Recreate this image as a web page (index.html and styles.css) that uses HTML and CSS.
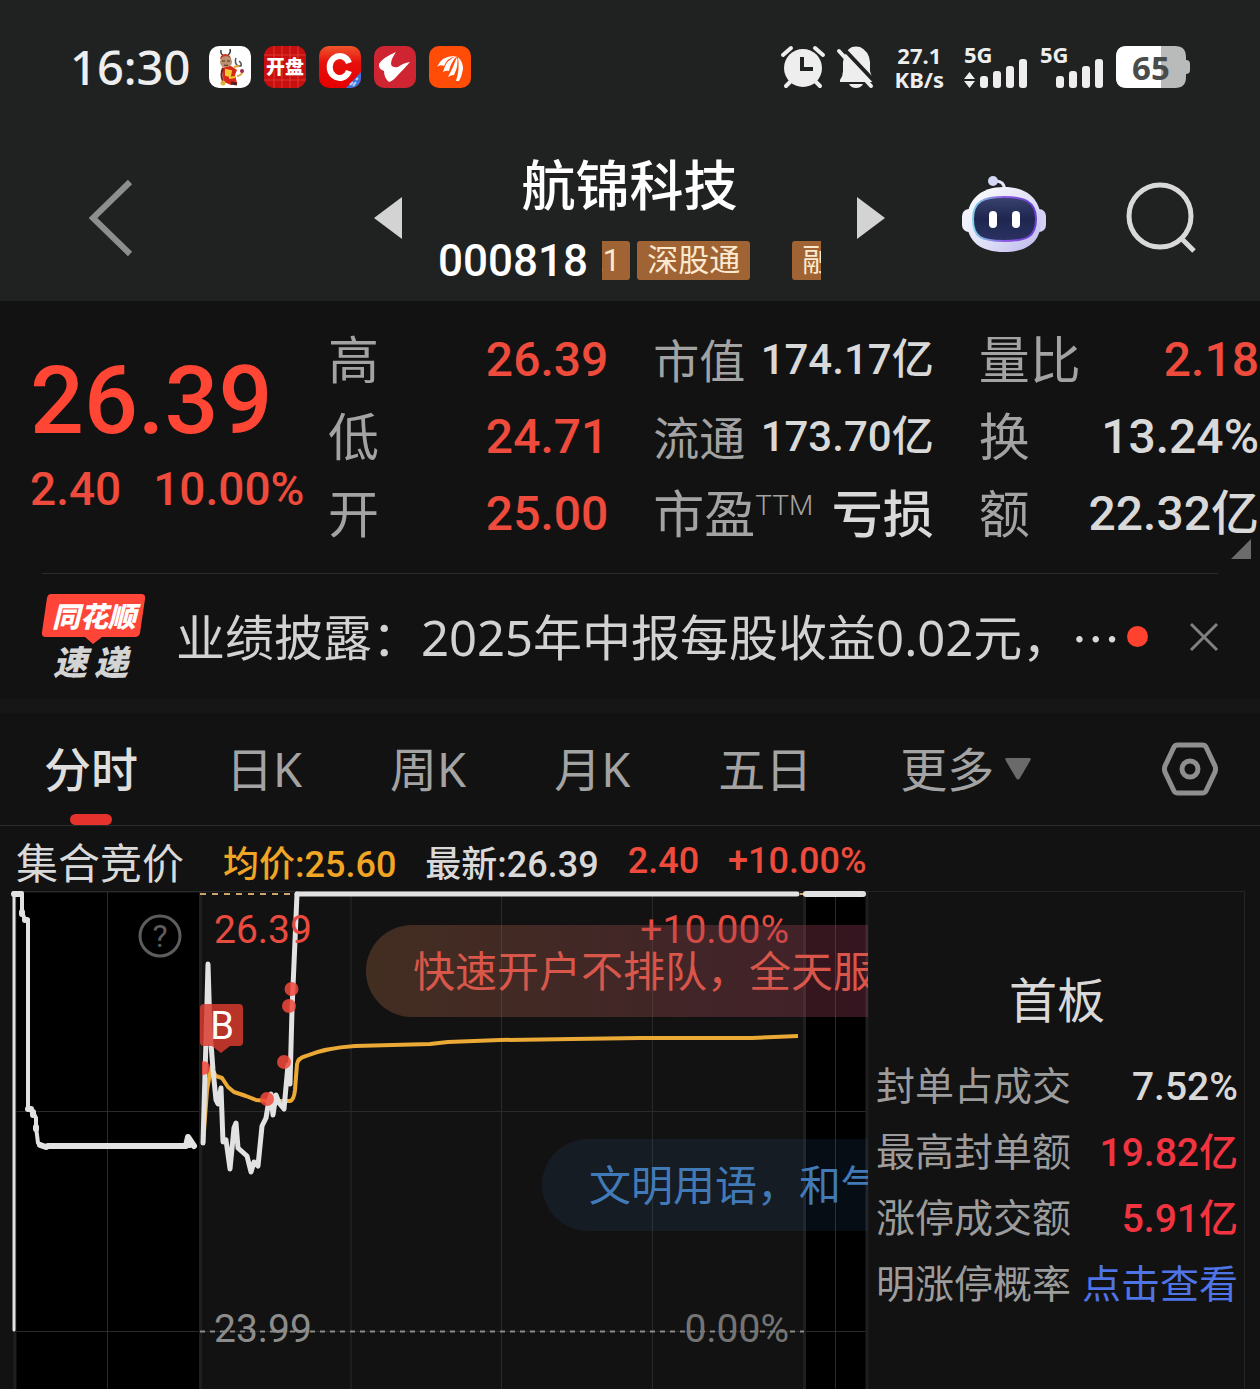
FILE: index.html
```html
<!DOCTYPE html>
<html lang="zh-CN">
<head>
<meta charset="utf-8">
<meta name="viewport" content="width=device-width, initial-scale=1">
<title>航锦科技 000818</title>
<link rel="stylesheet" href="styles.css">
</head>
<body>
<div class="top">
  <div class="status">
    <time class="clock">16:30</time>
    <div class="apps">
      <svg class="app" viewBox="0 0 42 42" role="img" aria-label="财神">
        <rect width="42" height="42" rx="10" fill="#fff"/>
        <path d="M12 4q-1 5 4 6M21 3q1 4-2 6" fill="none" stroke="#333" stroke-width="1.5"/>
        <path d="M12 10q4-4 9 0l1 3H11z" fill="#c8371c"/>
        <ellipse cx="17" cy="16" rx="6" ry="6" fill="#b99272"/>
        <path d="M13 15h3M18 15h3M15 19q2 1 4 0" stroke="#4a2c1e" fill="none"/>
        <path d="M13 22l9-2 6 4-2 5 2 8-6 2-7-3-1-5z" fill="#d8281a"/>
        <path d="M17 24l5 1-1 5-4-1zM20 32l6-1" fill="#f3c832" stroke="#f3c832" stroke-width="2"/>
        <path d="M14 22q-3 7 0 13" stroke="#7a1c14" stroke-width="2" fill="none"/>
        <circle cx="14" cy="37" r="2.5" fill="#e0b23c"/>
        <path d="M27 12q-2 5 2 8h3q1-3-2-5" fill="none" stroke="#555" stroke-width="1.5"/>
        <path d="M25 21l5-1M28 30q4 0 6-5" stroke="#e0a63c" stroke-width="2" fill="none"/>
        <circle cx="33" cy="25" r="2" fill="#a32a4a"/>
        <path d="M22 37l6 1" stroke="#55201c" stroke-width="3"/>
      </svg>
      <svg class="app" viewBox="0 0 42 42" role="img" aria-label="开盘">
        <rect width="42" height="42" rx="10" fill="#c70f10"/>
        <path d="M10 0v42M18 0v42M26 0v42M34 0v42M0 9h42M0 34h42" stroke="#e0392f"/>
        <text class="app-text" x="21" y="28" text-anchor="middle">开盘</text>
      </svg>
      <svg class="app" viewBox="0 0 42 42" role="img" aria-label="C 电股">
        <defs>
          <linearGradient id="cg" x1="0" y1="0" x2="0" y2="1"><stop offset="0" stop-color="#f0562a"/><stop offset=".4" stop-color="#e60f0c"/><stop offset="1" stop-color="#e60000"/></linearGradient>
          <clipPath id="cc"><rect width="42" height="42" rx="10"/></clipPath>
        </defs>
        <g clip-path="url(#cc)">
          <rect width="42" height="42" fill="url(#cg)"/>
          <path d="M42 26v16H27z" fill="#3a73dc"/>
          <path d="M31 39l3-3M34 40l3-4M37 34l2-2" stroke="#b8d0ff" stroke-width="2"/>
        </g>
        <path d="M30 17A10 11 0 1 0 30 25" fill="none" stroke="#fff" stroke-width="6"/>
      </svg>
      <svg class="app" viewBox="0 0 42 42" role="img" aria-label="同花顺">
        <rect width="42" height="42" rx="10" fill="#cf2431"/>
        <path d="M22 6q-14 6-17 12-1 5 5 7 0 7 5 11 4-1 8-6 7-7 13-14-7 1-12 5-6 1-7-3 0-5 5-12z" fill="#fff"/>
      </svg>
      <svg class="app" viewBox="0 0 42 42" role="img" aria-label="东方财富">
        <rect width="42" height="42" rx="10" fill="#ff4d08"/>
        <path d="M8 21Q13 9 27 10q-9 2-12 10-4-2-7 1zM14 26Q17 13 28 10q-6 6-8 15-3-1-6 1zM19 31Q24 22 28 11q2 8-3 18-3 0-6 2zM27 35q4-12 2-24 5 5 5 12-1 7-4 12z" fill="#fff"/>
      </svg>
    </div>
    <div class="indicators">
      <svg class="ic-alarm" viewBox="0 0 44 42" aria-label="闹钟" role="img">
        <path d="M2 9l8-7M42 9l-8-7" stroke="#eee" stroke-width="4" stroke-linecap="round"/>
        <path d="M5 40l6-6M39 40l-6-6" stroke="#eee" stroke-width="4" stroke-linecap="round"/>
        <circle cx="22" cy="22" r="19" fill="#eee"/>
        <path d="M21 11v12h11" fill="none" stroke="#202221" stroke-width="4"/>
      </svg>
      <svg class="ic-bell" viewBox="0 0 38 42" aria-label="静音" role="img">
        <path d="M3 34q3-4 3-9v-9Q8 4 15 1q4-1 8 0 9 4 10 15v9q1 5 4 9v2H3z" fill="#eee"/>
        <path d="M12 38h14q-2 4-7 4t-7-4z" fill="#eee"/>
        <path d="M5 1l34 36" stroke="#202221" stroke-width="4"/>
        <path d="M2 5l32 35" stroke="#eee" stroke-width="4" stroke-linecap="round"/>
      </svg>
      <div class="speed"><span>27.1</span><span>KB/s</span></div>
      <svg class="ic-signal" viewBox="0 0 64 42" role="img" aria-label="5G 信号">
        <text class="sig-text" x="0" y="17">5G</text>
        <path d="M5.5 26l5.5 7H0zM5.500 42L0 35h11z" fill="#eee"/>
        <g fill="#eee"><rect x="16" y="30" width="8" height="12" rx="3"/><rect x="29" y="25" width="8" height="17" rx="3"/><rect x="42" y="20" width="8" height="22" rx="3"/><rect x="55" y="13" width="8" height="29" rx="3"/></g>
      </svg>
      <svg class="ic-signal" viewBox="0 0 64 42" role="img" aria-label="5G 信号">
        <text class="sig-text" x="0" y="17">5G</text>
        <g fill="#eee"><rect x="16" y="30" width="8" height="12" rx="3"/><rect x="29" y="25" width="8" height="17" rx="3"/><rect x="42" y="20" width="8" height="22" rx="3"/><rect x="55" y="13" width="8" height="29" rx="3"/></g>
      </svg>
      <svg class="ic-battery" viewBox="0 0 74 42" role="img" aria-label="电量 65">
        <defs><clipPath id="bat"><path d="M11 0h48q11 0 11 11v3q4 0 4 4v6q0 4-4 4v3q0 11-11 11H11Q0 42 0 31V11Q0 0 11 0z"/></clipPath></defs>
        <g clip-path="url(#bat)"><rect width="74" height="42" fill="#b9bbba"/><rect width="45" height="42" fill="#fff"/></g>
        <text class="bat-text" x="35" y="34" text-anchor="middle">65</text>
      </svg>
    </div>
  </div>

  <header class="header">
    <button class="icon-btn back" aria-label="返回">
      <svg width="42" height="76" viewBox="0 0 42 76"><path d="M40 2L3 38l37 36" fill="none" stroke="#8d8f8e" stroke-width="6"/></svg>
    </button>
    <div class="stock">
      <button class="icon-btn" aria-label="上一只"><svg width="28" height="42" viewBox="0 0 28 42"><path d="M28 0v42L0 21z" fill="#d3d3d3"/></svg></button>
      <div class="stock-title">
        <h1>航锦科技</h1>
        <div class="code-row">
          <span class="code">000818</span>
          <div class="ticker"><span class="tag tag-first">L1</span><span class="tag">深股通</span><span class="tag tag-next">融</span></div>
        </div>
      </div>
      <button class="icon-btn" aria-label="下一只"><svg width="28" height="42" viewBox="0 0 28 42"><path d="M0 0v42l28-21z" fill="#d3d3d3"/></svg></button>
    </div>
    <div class="actions">
      <button class="icon-btn robot" aria-label="智能助手">
        <svg width="84" height="78" viewBox="0 0 84 78">
          <defs>
            <linearGradient id="rb" x1="0" y1="0" x2="1" y2="1"><stop offset="0" stop-color="#fff"/><stop offset=".6" stop-color="#dcdcf6"/><stop offset="1" stop-color="#b9b4ea"/></linearGradient>
            <linearGradient id="rs" x1="0" y1="0" x2="1" y2="0"><stop offset="0" stop-color="#7fd0e8"/><stop offset=".5" stop-color="#8a5ae0"/><stop offset="1" stop-color="#6a3fd6"/></linearGradient>
            <linearGradient id="rf" x1="0" y1="0" x2="0" y2="1"><stop offset="0" stop-color="#39436e"/><stop offset=".5" stop-color="#1e2650"/><stop offset="1" stop-color="#2b3262"/></linearGradient>
          </defs>
          <path d="M32 6q10-1 11 9" fill="none" stroke="#e4e4fa" stroke-width="3"/>
          <circle cx="31" cy="6" r="5" fill="#d5d8f4"/>
          <rect x="0" y="34" width="16" height="23" rx="7" fill="#f1f1fd"/><rect x="68" y="34" width="16" height="23" rx="7" fill="#d4d0f6"/>
          <path d="M42 12c24 0 37 13 37 34S65 77 42 77 5 67 5 46s13-34 37-34z" fill="url(#rb)"/>
          <path d="M42 22c20 0 32 4 32 22S65 66 42 66 11 62 11 44s11-22 31-22z" fill="url(#rf)" stroke="url(#rs)" stroke-width="2"/>
          <rect x="27" y="36" width="8" height="17" rx="4" fill="#fff"/><rect x="50" y="36" width="8" height="17" rx="4" fill="#fff"/>
        </svg>
      </button>
      <button class="icon-btn" aria-label="搜索">
        <svg width="70" height="70" viewBox="0 0 70 70"><circle cx="34" cy="33" r="31" fill="none" stroke="#d9d9d9" stroke-width="5"/><path d="M56 56l12 12" stroke="#d9d9d9" stroke-width="5"/></svg>
      </button>
    </div>
  </header>
</div>

<main>
  <section class="quote">
    <div class="price">
      <strong>26.39</strong>
      <div class="change"><span>2.40</span><span>10.00%</span></div>
    </div>
    <dl class="stats">
      <div><dt>高</dt><dd class="up">26.39</dd></div>
      <div class="compact"><dt>市值</dt><dd>174.17亿</dd></div>
      <div><dt>量比</dt><dd class="up">2.18</dd></div>
      <div><dt>低</dt><dd class="up">24.71</dd></div>
      <div class="compact"><dt>流通</dt><dd>173.70亿</dd></div>
      <div><dt>换</dt><dd>13.24%</dd></div>
      <div><dt>开</dt><dd class="up">25.00</dd></div>
      <div class="wordy"><dt>市盈<sup>TTM</sup></dt><dd>亏损</dd></div>
      <div><dt>额</dt><dd>22.32亿</dd></div>
    </dl>
    <svg class="corner" viewBox="0 0 20 20" aria-hidden="true"><path d="M20 0v20H0z" fill="#6b6b6b"/></svg>
  </section>

  <section class="news">
    <svg class="news-logo" viewBox="0 0 104 86" role="img" aria-label="同花顺速递">
      <path d="M9 0h90q5 0 4 5l-5 34q-1 4-5 4H60l-9 7-8-7H4q-5 0-4-5L5 4q1-4 4-4z" fill="#ff4538"/>
      <text class="logo-a" x="10" y="33">同花顺</text>
      <text class="logo-b" x="11" y="81">速</text><text class="logo-b" x="52" y="81">递</text>
    </svg>
    <a class="headline" href="#">业绩披露：2025年中报每股收益0.02元，</a>
    <span class="more-dots">⋯</span>
    <span class="dot"></span>
    <button class="icon-btn close" aria-label="关闭"><svg width="28" height="28" viewBox="0 0 28 28"><path d="M1 1l26 26M27 1L1 27" stroke="#808080" stroke-width="3"/></svg></button>
  </section>

  <nav class="tabs">
    <button class="tab active">分时</button>
    <button class="tab">日K</button>
    <button class="tab">周K</button>
    <button class="tab">月K</button>
    <button class="tab">五日</button>
    <button class="tab more">更多<svg width="26" height="22" viewBox="0 0 26 22"><path d="M2 0h22q3 0 1 3L15 20q-2 3-4 0L1 3Q-1 0 2 0z" fill="#6a6a6a"/></svg></button>
    <button class="icon-btn settings" aria-label="设置"><svg width="56" height="54" viewBox="0 0 56 54"><path d="M16 3h24q3 0 4 2l9 19q1 3 0 6l-9 19q-1 2-4 2H16q-3 0-4-2L3 30q-1-3 0-6l9-19q1-2 4-2z" fill="none" stroke="#8f8f8f" stroke-width="5"/><circle cx="28" cy="27" r="8" fill="none" stroke="#8f8f8f" stroke-width="5"/></svg></button>
  </nav>

  <div class="legend">
    <span class="auction">集合竞价</span>
    <span class="avg">均价:25.60</span>
    <span>最新:26.39</span>
    <span class="up">2.40</span>
    <span class="up">+10.00%</span>
  </div>

  <div class="board">
    <div class="chart">
      <svg class="plot" viewBox="0 891 868 498" role="img" aria-label="分时走势">
        <rect x="16" y="893" width="183" height="496" fill="#000"/>
        <rect x="806" y="893" width="60" height="496" fill="#000"/>
        <g stroke="#2a2a2a" stroke-width="1">
          <path d="M14 891.500H868M14 1111.500H868M14 1331.500H868"/>
          <path d="M107.500 892V1389M351 892V1389M501.500 892V1389M652.500 892V1389M835.500 892V1389"/>
        </g>
        <path d="M15 892V1389M200.500 892V1389M804.500 892V1389M867 892V1389" stroke="#1f1f1f" stroke-width="3"/>
        <path d="M200 894H296M800 894H804" stroke="#cda46a" stroke-width="2" stroke-dasharray="6 6"/>
        <path d="M200 1331.500H804" stroke="#8a8a8a" stroke-width="2" stroke-dasharray="5 5"/>

        <path d="M203 1145L207 1090 211 1068 216 1076 222 1078 228 1087 234 1092 246 1096 256 1100 268 1101 280 1101H290Q294 1100 295 1090L297 1064Q298 1058 306 1056 325 1048 355 1046L430 1044 448 1042 500 1040 572 1039 640 1038 752 1038 798 1036" fill="none" stroke="#eba935" stroke-width="4" stroke-linejoin="round"/>
        <g fill="none" stroke="#e2e2e2" stroke-linejoin="round" stroke-linecap="round">
          <path d="M14 1330V893" stroke-width="3"/>
          <path d="M14 893H22V912L25 920H28V1109L33 1112 36 1118 36 1127 38 1143 44 1146H190" stroke-width="4"/>
          <path d="M14 894H20M22 912V914M25 920H27M28 1109H31M33 1112V1115M36 1127V1129M40 1145L46 1147 48 1146H186L188 1137 194 1146" stroke-width="6"/>
          <path d="M203 1143L206 1040 208 964 210 1030 213 1070 216 1100 218 1104 221 1088 223 1142 226 1140 230 1169 234 1128 236 1123 238 1148 247 1156 251 1172 254 1162 258 1166 262 1126 266 1118 269 1100 271 1094 273 1115 276 1095 279 1103 284 1109 288 1065 290 1084 292 1010 297 894" stroke-width="5"/>
          <path d="M297 894H797" stroke-width="5"/>
          <path d="M806 894H863" stroke-width="6"/>
        </g>
        <g fill="#f0483a" fill-opacity=".86">
          <path d="M202 1061q8 0 8 7t-8 7z"/>
          <circle cx="291.500" cy="989" r="7"/><circle cx="289" cy="1006" r="7"/><circle cx="284" cy="1062" r="7"/><circle cx="267" cy="1099" r="7"/>
          <path d="M204 1004h35q4 0 4 4v34q0 4-4 4h-9l-9 7-9-7h-8q-4 0-4-4v-34q0-4 4-4z" fill="#d93a2d" fill-opacity=".84"/>
        </g>
        <text class="buy" x="222" y="1039" text-anchor="middle">B</text>
        <circle cx="160" cy="936" r="20" fill="none" stroke="#5d5d5d" stroke-width="3"/>
        <text class="help" x="160" y="947" text-anchor="middle">?</text>
        <text class="axis axis-up" x="214" y="943">26.39</text>
        <text class="axis axis-up" x="789" y="943" text-anchor="end">+10.00%</text>
        <text class="axis axis-base" x="214" y="1342">23.99</text>
        <text class="axis axis-base dim" x="789" y="1342" text-anchor="end">0.00%</text>
      </svg>
      <div class="bubble bubble-red">快速开户不排队，全天服务</div>
      <div class="bubble bubble-blue">文明用语，和气生财</div>
    </div>

    <aside class="panel">
      <h2>首板</h2>
      <dl>
        <div><dt>封单占成交</dt><dd>7.52%</dd></div>
        <div><dt>最高封单额</dt><dd class="red">19.82亿</dd></div>
        <div><dt>涨停成交额</dt><dd class="red">5.91亿</dd></div>
        <div><dt>明涨停概率</dt><dd><a href="#">点击查看</a></dd></div>
      </dl>
    </aside>
  </div>
</main>
</body>
</html>
```
FILE: styles.css
```css
* { box-sizing: border-box; }

body {
  margin: 0;
  background: #121212;
  color: #d9d9d9;
  font-family: Roboto, "Noto Sans CJK SC", sans-serif;
  overflow-x: hidden;
}

h1, h2, dl, dd { margin: 0; }
button { font: inherit; color: inherit; background: none; border: 0; padding: 0; }
svg { display: block; overflow: visible; }
a { text-decoration: none; }
.icon-btn { display: block; }
.up { color: #ee4b3c; }

/* Status bar and title */
.top { background: #202221; }

.status {
  display: flex;
  align-items: center;
  height: 134px;
  padding: 0 70px;
}
.clock {
  font: 500 47px/1 "Noto Sans", "Noto Sans CJK SC", sans-serif;
  color: #eee;
}
.apps { display: flex; gap: 13px; margin-left: 19px; }
.app { width: 42px; height: 42px; }
.app-text { font: 900 19px "Noto Sans CJK SC", sans-serif; fill: #fff; }
.indicators { display: flex; align-items: center; gap: 12px; margin-left: auto; }
.ic-alarm { width: 44px; height: 42px; }
.ic-bell { width: 38px; height: 42px; }
.speed {
  display: flex;
  flex-direction: column;
  align-items: center;
  margin: 0 8px;
  font: 700 22px/24px "Noto Sans", "Noto Sans CJK SC", sans-serif;
  color: #eee;
}
.ic-signal { width: 64px; height: 42px; }
.sig-text { font: 700 22px "Noto Sans", "Noto Sans CJK SC", sans-serif; fill: #eee; }
.ic-battery { width: 74px; height: 42px; }
.bat-text { font: 700 33px "Noto Sans", "Noto Sans CJK SC", sans-serif; fill: #4a4b4b; }

.header {
  display: grid;
  grid-template-columns: 1fr auto 1fr;
  align-items: center;
  height: 167px;
  padding: 0 64px 0 90px;
}
.stock { display: flex; align-items: center; gap: 36px; margin-right: 27px; }
.stock-title { width: 383px; padding-top: 10px; color: #fff; }
.stock-title h1 {
  font-size: 54px;
  font-weight: 500;
  line-height: 76px;
  text-align: center;
}
.code-row { display: flex; align-items: center; gap: 14px; height: 70px; }
.code { font-size: 44px; font-weight: 500; line-height: 1; }
.ticker { display: flex; flex: 1; gap: 7px; overflow: hidden; }
.tag {
  flex: none;
  height: 39px;
  padding: 0 10px;
  border-radius: 3px;
  background: #a06434;
  color: #fbe9d0;
  font-size: 31px;
  line-height: 40px;
}
.tag-first { margin-left: -26px; }
.tag-next { margin-left: 35px; }
.actions { display: flex; justify-content: flex-end; align-items: center; gap: 80px; }
.robot { margin-bottom: 8px; }

/* Quote */
.quote {
  position: relative;
  display: grid;
  grid-template-columns: 328fr 932fr;
  padding: 20px 0 22px;
}
.quote::after {
  content: "";
  position: absolute;
  left: 42px;
  right: 42px;
  bottom: 0;
  border-bottom: 1px solid #2c2c2c;
}
.price { padding: 28px 0 0 30px; color: #ff4534; }
.price strong { display: block; font-size: 95px; font-weight: 500; line-height: 104px; }
.change { display: flex; gap: 32px; font-size: 46px; line-height: 72px; font-weight: 500; white-space: nowrap; color: #ee4b3c; }
.stats {
  display: grid;
  grid-template-columns: repeat(3, 1fr);
  column-gap: 45px;
  padding-right: 1px;
  font-size: 48px;
  line-height: 77px;
  white-space: nowrap;
}
.stats div { display: flex; justify-content: space-between; height: 77px; }
.stats dt { font-size: 51px; line-height: 82px; color: #a3a3a3; font-weight: 400; }
.stats dd { font-weight: 500; }
.stats .compact dt { font-size: 46px; }
.stats .compact dd { font-size: 42px; }
.stats .wordy dd { font-size: 51px; line-height: 82px; }
.stats sup { font-size: 28px; line-height: 0; font-weight: 300; }
.corner { position: absolute; right: 9px; bottom: 15px; width: 20px; height: 20px; }

/* News strip */
.news {
  display: flex;
  align-items: center;
  height: 125px;
  padding: 0 42px;
}
.news-logo { width: 104px; height: 86px; flex: none; }
.logo-a { font: italic 900 28px "Noto Sans CJK SC", sans-serif; fill: #fff; }
.logo-b { font: italic 900 34px "Noto Sans CJK SC", sans-serif; fill: #d4d4d4; }
.headline {
  flex: 0 1 auto;
  margin-left: 30px;
  overflow: hidden;
  color: #d2d2d2;
  font: 400 49px/72px "Noto Sans", "Noto Sans CJK SC", sans-serif;
  white-space: nowrap;
}
.more-dots { font: 400 49px/72px "Noto Sans CJK SC", sans-serif; }
.dot { width: 21px; height: 21px; margin-left: auto; flex: none; border-radius: 50%; background: #ff4230; }
.close { margin-left: 42px; flex: none; }

/* Period tabs */
.tabs {
  display: flex;
  align-items: center;
  gap: 88px;
  height: 127px;
  padding: 0 42px 0 44px;
  border-top: 14px solid #161616;
  border-bottom: 1px solid #2c2c2c;
}
.tab {
  position: relative;
  height: 112px;
  color: #a3a3a3;
  font: 400 47px/112px "Noto Sans", "Noto Sans CJK SC", sans-serif;
  white-space: nowrap;
}
.tab.active { color: #dedede; font-weight: 500; }
.tab.active::after {
  content: "";
  position: absolute;
  left: 26px;
  right: 26px;
  bottom: 0;
  height: 11px;
  border-radius: 6px;
  background: #e5322d;
}
.more { display: flex; align-items: center; gap: 11px; }
.settings { margin-left: auto; }

/* Intraday chart */
.legend {
  display: flex;
  align-items: center;
  height: 65px;
  padding: 4px 0 0 16px;
  gap: 29px;
  font-size: 36px;
  font-weight: 500;
  white-space: nowrap;
}
.auction { font-size: 42px; font-weight: 400; margin-right: 10px; }
.avg { color: #f0a524; }

.board {
  display: grid;
  grid-template-columns: 868fr 377fr;
  padding-right: 15px;
}
.chart { position: relative; }
.plot { width: 100%; height: auto; }
.axis { font-size: 39px; font-weight: 400; }
.axis-up { fill: #e84b3f; }
.axis-base { fill: #8c8c8c; }
.axis-base.dim { fill: #747474; }
.buy { font-size: 38px; fill: #fff; }
.help { font-size: 32px; fill: #5d5d5d; }

.bubble {
  position: absolute;
  right: 0;
  height: 92px;
  padding-left: 47px;
  border-radius: 46px 0 0 46px;
  overflow: hidden;
  font-size: 42px;
  line-height: 96px;
  white-space: nowrap;
}
.bubble-red {
  top: 34px;
  left: 366px;
  color: #d9574a;
  background: linear-gradient(90deg, rgba(170, 104, 66, .32), rgba(155, 60, 90, .34));
}
.bubble-blue {
  top: 248px;
  left: 542px;
  color: #427ab8;
  background: rgba(44, 92, 150, .14);
}

.panel {
  padding: 71px 6px 0 8px;
  border-top: 1px solid #242424;
  border-right: 1px solid #242424;
}
.panel h2 { font-size: 48px; font-weight: 400; line-height: 78px; text-align: center; }
.panel dl { margin-top: 13px; font-size: 39px; line-height: 66px; white-space: nowrap; }
.panel dl div { display: flex; justify-content: space-between; }
.panel dt { color: #9c9c9c; font-weight: 400; }
.panel dd { font-weight: 500; }
.panel .red { color: #f23440; }
.panel a { color: #4f74e6; font-weight: 400; }
```
